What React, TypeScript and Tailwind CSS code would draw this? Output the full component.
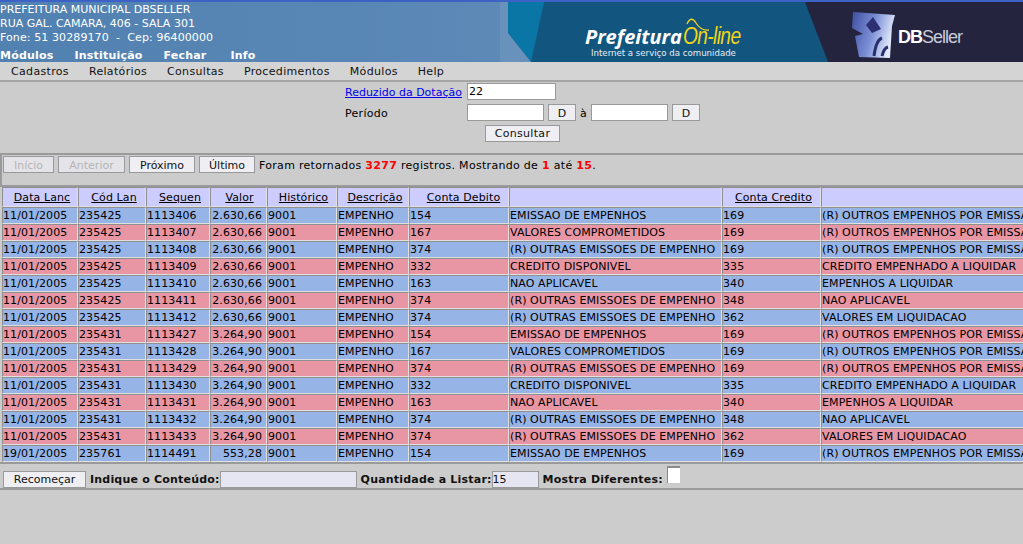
const columns = [
  { label: 'Data Lanc', width: 76, pad: 'pl-[4px]' },
  { label: 'Cód Lan', width: 68, pad: 'pl-[4px]' },
  { label: 'Sequen', width: 64, pad: 'pl-[4px]' },
  { label: 'Valor', width: 57, pad: 'pl-[2px]' },
  { label: 'Histórico', width: 70, pad: 'pl-[3px]' },
  { label: 'Descrição', width: 72, pad: 'pl-[4px]' },
  { label: 'Conta Debito', width: 100, pad: 'pl-[9px]' },
  { label: '', width: 213, pad: '' },
  { label: 'Conta Credito', width: 99, pad: 'pl-[4px]' },
  { label: '', width: 300, pad: '' },
];

const outros = '(R) OUTROS EMPENHOS POR EMISSAO';
const outras = '(R) OUTRAS EMISSOES DE EMPENHO';

const rows = [
  ['11/01/2005', '235425', '1113406', '2.630,66', '154', 'EMISSAO DE EMPENHOS', '169', outros],
  ['11/01/2005', '235425', '1113407', '2.630,66', '167', 'VALORES COMPROMETIDOS', '169', outros],
  ['11/01/2005', '235425', '1113408', '2.630,66', '374', outras, '169', outros],
  ['11/01/2005', '235425', '1113409', '2.630,66', '332', 'CREDITO DISPONIVEL', '335', 'CREDITO EMPENHADO A LIQUIDAR'],
  ['11/01/2005', '235425', '1113410', '2.630,66', '163', 'NAO APLICAVEL', '340', 'EMPENHOS A LIQUIDAR'],
  ['11/01/2005', '235425', '1113411', '2.630,66', '374', outras, '348', 'NAO APLICAVEL'],
  ['11/01/2005', '235425', '1113412', '2.630,66', '374', outras, '362', 'VALORES EM LIQUIDACAO'],
  ['11/01/2005', '235431', '1113427', '3.264,90', '154', 'EMISSAO DE EMPENHOS', '169', outros],
  ['11/01/2005', '235431', '1113428', '3.264,90', '167', 'VALORES COMPROMETIDOS', '169', outros],
  ['11/01/2005', '235431', '1113429', '3.264,90', '374', outras, '169', outros],
  ['11/01/2005', '235431', '1113430', '3.264,90', '332', 'CREDITO DISPONIVEL', '335', 'CREDITO EMPENHADO A LIQUIDAR'],
  ['11/01/2005', '235431', '1113431', '3.264,90', '163', 'NAO APLICAVEL', '340', 'EMPENHOS A LIQUIDAR'],
  ['11/01/2005', '235431', '1113432', '3.264,90', '374', outras, '348', 'NAO APLICAVEL'],
  ['11/01/2005', '235431', '1113433', '3.264,90', '374', outras, '362', 'VALORES EM LIQUIDACAO'],
  ['19/01/2005', '235761', '1114491', '553,28', '154', 'EMISSAO DE EMPENHOS', '169', outros],
];

function Btn({ label, off, className = '' }: { label: string; off?: boolean; className?: string }) {
  return (
    <button
      className={`h-[17px] border border-[#999] pt-[1px] text-[11px] leading-none ${
        off ? 'bg-[#e4e4e8] text-[#b5b5b5]' : 'bg-[#eeeef3] text-[#111]'
      } ${className}`}
    >
      {label}
    </button>
  );
}

function Banner() {
  return (
    <div className="relative h-full flex-1 overflow-hidden">
      <svg width="523" height="60" viewBox="0 0 523 60" className="absolute left-0 top-0">
        <defs>
          <linearGradient id="cube" x1="0" y1="0" x2="1" y2="0.3">
            <stop offset="0" stopColor="#3f4f9f" />
            <stop offset="0.55" stopColor="#7b8fd6" />
            <stop offset="1" stopColor="#e3e9fb" />
          </linearGradient>
        </defs>
        <rect width="523" height="60" fill="#125680" />
        <polygon points="8,0 44,0 31,60 8,31" fill="#0a76a6" />
        <polygon points="0,0 8,0 8,31 31,60 0,60" fill="#6892bc" />
        <polygon points="305,0 523,0 523,60 328,60" fill="#24243f" />
        <path d="M353 10 L395 13 L392 24 L390 56 L359 55 L355 34 L363 32 L352 26 Z" fill="url(#cube)" />
        <path d="M366 23 L373 15 L381 27 L372 31 Z" fill="#2d2f73" />
        <path d="M374 54 Q376 38 382 36 M382 54 Q384 46 388 45" stroke="#28306e" strokeWidth="3" fill="none" />
        <path d="M187 22 Q191 13 196 21 Q201 29 209 28" stroke="#f1d516" strokeWidth="1.3" fill="none" />
      </svg>
      <span className="absolute left-[85px] top-[25px] text-[20px] font-bold italic leading-[20px] tracking-[0px] text-white font-['Open_Sans',sans-serif]">
        Prefeitura
      </span>
      <span className="absolute left-[183px] top-[22px] origin-left scale-x-[0.8] text-[24px] italic leading-[24px] tracking-[-0.8px] text-[#f1d516] font-['Liberation_Sans',sans-serif]">
        On-line
      </span>
      <span className="absolute left-[91px] top-[46px] text-[8.6px] leading-[10px] text-[#e8eef2] font-['DejaVu_Sans',sans-serif]">
        Internet a serviço da comunidade
      </span>
      <span className="absolute left-[398px] top-[25px] text-[18px] font-bold leading-[20px] tracking-[-1px] text-white font-['Liberation_Sans',sans-serif]">
        DB<span className="font-normal text-[#c9cbd8]">Seller</span>
      </span>
    </div>
  );
}

export default function App() {
  return (
    <div className="h-[544px] w-[1023px] overflow-hidden bg-[#cccccc] font-['DejaVu_Sans',sans-serif] text-[11px] leading-[13px] text-black">
      <header className="flex h-[62px] border-t-2 border-[#3b62c4] bg-gradient-to-r from-[#5181b1] to-[#6892bc]">
        <div className="w-[500px] shrink-0 pt-[1px] text-white">
          <div className="h-[14px] leading-[14px]">PREFEITURA MUNICIPAL DBSELLER</div>
          <div className="h-[14px] leading-[14px]">RUA GAL. CAMARA, 406 - SALA 301</div>
          <div className="h-[14px] whitespace-pre leading-[14px] tracking-[0.1px]">Fone: 51 30289170  -  Cep: 96400000</div>
          <nav className="mt-[4px] flex gap-[21px] font-bold leading-[13px] tracking-[0.2px]">
            <span>Módulos</span>
            <span>Instituição</span>
            <span>Fechar</span>
            <span className="ml-[3px]">Info</span>
          </nav>
        </div>
        <Banner />
      </header>

      <div className="flex h-[20px] items-center gap-[20px] border-b-2 border-[#a5a5a5] bg-[#d4d4d4] pl-[11px] pt-[1px] tracking-[0.33px] text-[#111]">
        <span>Cadastros</span>
        <span>Relatórios</span>
        <span>Consultas</span>
        <span>Procedimentos</span>
        <span>Módulos</span>
        <span>Help</span>
      </div>

      <form className="flex h-[71px] flex-col pl-[345px]">
        <div className="flex h-[19px] items-center">
          <a href="#" className="w-[122px] pt-[1px] text-[#0000ee] underline">Reduzido da Dotação</a>
          <input
            defaultValue="22"
            className="h-[17px] w-[89px] border border-[#999] bg-white px-[1px] text-[11px] text-black outline-none"
          />
        </div>
        <div className="flex h-[23px] items-center">
          <span className="w-[122px] pt-[1px] tracking-[0.3px]">Período</span>
          <input className="h-[17px] w-[77px] border border-[#999] bg-white outline-none" />
          <Btn label="D" className="ml-[4px] w-[28px]" />
          <span className="mx-[4px] w-[7px] pt-[1px]">à</span>
          <input className="h-[17px] w-[77px] border border-[#999] bg-white outline-none" />
          <Btn label="D" className="ml-[4px] w-[28px]" />
        </div>
        <div className="flex h-[18px] items-center pl-[140px]">
          <Btn label="Consultar" className="w-[75px] tracking-[0.3px]" />
        </div>
      </form>

      <section className="h-[34px] border-y-2 border-l-2 border-[#9a9a9a] pl-[1px]">
        <div className="flex h-[19px] items-center gap-[4px]">
          <Btn label="Início" off className="w-[51px]" />
          <Btn label="Anterior" off className="w-[67px]" />
          <Btn label="Próximo" className="w-[66px]" />
          <Btn label="Último" className="w-[56px]" />
          <span className="pt-[1px] tracking-[0.3px]">
            Foram retornados <b className="text-[#f00]">3277</b> registros. Mostrando de{' '}
            <b className="text-[#f00]">1</b> até <b className="text-[#f00]">15</b>.
          </span>
        </div>
      </section>

      <table className="ml-[2px] w-[1119px] table-fixed border-separate border-spacing-0">
        <colgroup>
          {columns.map((c, i) => (
            <col key={i} style={{ width: c.width }} />
          ))}
        </colgroup>
        <thead>
          <tr>
            {columns.map((c, i) => (
              <th
                key={i}
                className={`h-[20px] border border-b-[#e0e0e0] border-l-[#8f8f8f] border-r-[#e0e0e0] border-t-[#8f8f8f] bg-[#ccccff] p-0 text-center font-normal underline tracking-[0.1px] ${c.pad}`}
              >
                {c.label}
              </th>
            ))}
          </tr>
        </thead>
        <tbody>
          {rows.map((r, i) => {
            const bg = i % 2 === 0 ? 'bg-[#97b4e6]' : 'bg-[#e896a4]';
            const cells = [r[0], r[1], r[2], r[3], '9001', 'EMPENHO', r[4], r[5], r[6], r[7]];
            return (
              <tr key={i}>
                {cells.map((v, j) => (
                  <td
                    key={j}
                    className={`h-[17px] overflow-hidden whitespace-nowrap border border-b-[#e0e0e0] border-l-[#8f8f8f] border-r-[#e0e0e0] border-t-[#8f8f8f] p-0 leading-[13px] tracking-[0.1px] ${bg} ${
                      j === 3 ? 'pr-[4px] text-right' : 'text-left'
                    }`}
                  >
                    {v}
                  </td>
                ))}
              </tr>
            );
          })}
        </tbody>
      </table>

      <section className="flex h-[28px] items-center border-y-2 border-[#9a9a9a] pl-[3px] pt-[6px] text-[#111]">
        <Btn label="Recomeçar" className="w-[83px]" />
        <b className="ml-[4px] tracking-[0.2px]">Indique o Conteúdo:</b>
        <input className="h-[17px] w-[137px] border border-[#999] bg-[#e6e6f2] outline-none" />
        <b className="ml-[4px] tracking-[0.2px]">Quantidade a Listar:</b>
        <input
          defaultValue="15"
          className="h-[17px] w-[47px] border border-[#999] bg-[#e6e6f2] text-[11px] outline-none"
        />
        <b className="ml-[4px] tracking-[0.2px]">Mostra Diferentes:</b>
        <span className="mb-[9px] ml-[4px] h-[17px] w-[13px] border-l border-t-2 border-[#8a8a8a] bg-white" />
      </section>
    </div>
  );
}
